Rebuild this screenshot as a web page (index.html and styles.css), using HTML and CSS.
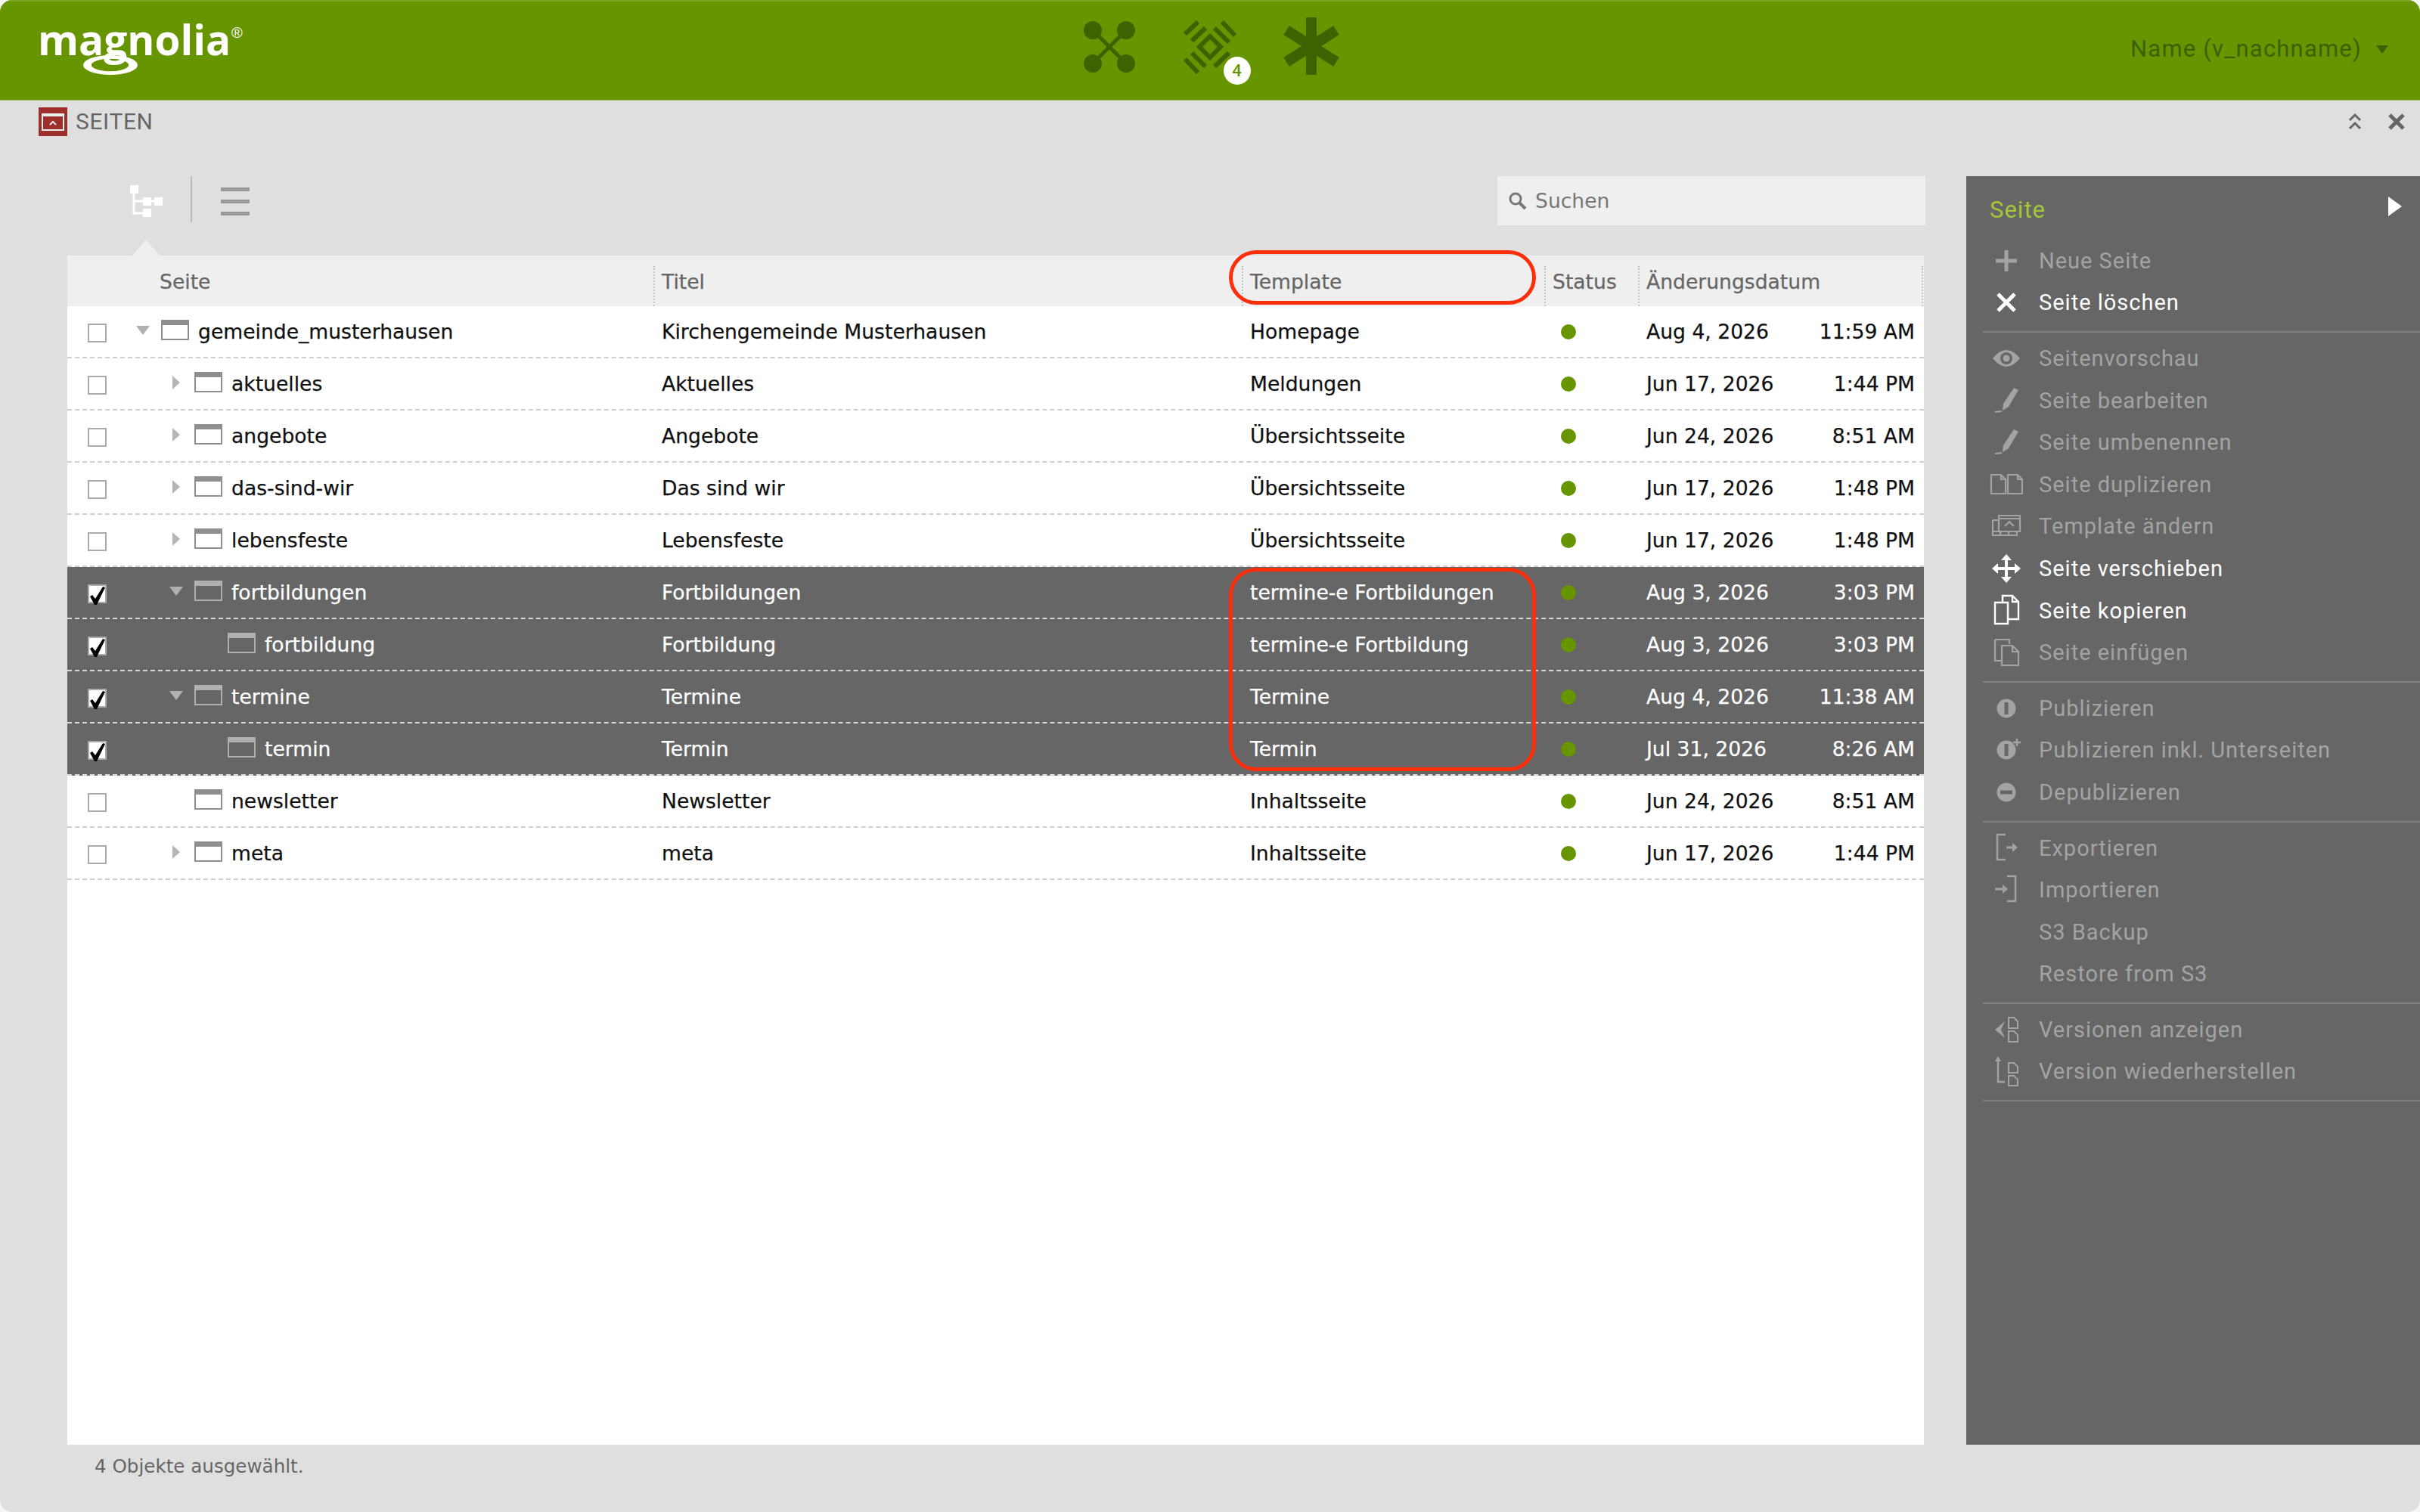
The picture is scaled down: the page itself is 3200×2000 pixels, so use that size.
FILE: index.html
```html
<!DOCTYPE html>
<html lang="de">
<head>
<meta charset="utf-8">
<title>Seiten</title>
<link rel="stylesheet" href="styles.css">
</head>
<body>
<svg class="defs" width="0" height="0">
  <symbol id="folder" viewBox="0 0 37 27"><rect x="1" y="1" width="35" height="25" fill="none" stroke="currentColor" stroke-width="2"/><rect x="1" y="1" width="35" height="6" fill="currentColor"/></symbol>
  <symbol id="pencil" viewBox="0 0 44 44"><path d="M32 5l6 3-13 22-8 5 1-9z" fill="currentColor"/><path d="M7 37l9-1" stroke="currentColor" stroke-width="2" fill="none"/></symbol>
  <symbol id="mark" viewBox="0 0 24 24"><path d="M2 13l3-2 4 5 10-16 3 1-11 23h-3z" fill="#000"/></symbol>
</svg>
<div class="app">
  <header class="topbar">
    <div class="logo">
      <svg width="290" height="110" viewBox="0 0 290 110">
        <text class="logo-text" x="0" y="73">magnolia</text>
        <path d="M60 86a36 13 0 1 0 72 0a36 13 0 1 0 -72 0zM71 87a24 8 0 1 1 49 -2a24 8 0 1 1 -49 2z" fill="#fff" fill-rule="evenodd"/>
        <text class="logo-reg" x="256" y="50">®</text>
      </svg>
    </div>
    <nav class="apps">
      <svg class="app-icon" width="68" height="68" viewBox="0 0 68 68"><path d="M12 12l44 44M56 12L12 56" stroke="#3d6300" stroke-width="5"/><circle cx="12" cy="12" r="12"/><circle cx="56" cy="12" r="12"/><circle cx="12" cy="56" r="12"/><circle cx="56" cy="56" r="12"/></svg>
      <div class="pulse">
        <svg width="70" height="72" viewBox="0 0 70 72"><g fill="none" stroke="#3d6300" stroke-width="6"><path d="M2 19L19 3M11 28L29 11M41 11L60 30M51 3L68 21M11 44L29 62M2 52L19 70M41 62L60 44"/><path d="M35 22L49 36 35 50 21 36z"/></g></svg>
        <span class="badge">4</span>
      </div>
      <svg class="app-icon" width="74" height="76" viewBox="0 0 74 76"><g stroke="#3d6300" stroke-width="14"><path d="M37 0v76"/><path d="M4 17l66 42"/><path d="M70 17L4 59"/></g></svg>
    </nav>
    <div class="user"><span>Name (v_nachname)</span><i class="caret"></i></div>
  </header>

  <div class="tabbar">
    <div class="tab">
      <svg width="38" height="38" viewBox="0 0 38 38"><rect width="38" height="38" fill="#9c2f2c"/><rect x="5" y="9" width="28" height="21" fill="none" stroke="#eee" stroke-width="2"/><rect x="5" y="8" width="28" height="4" fill="#eee"/><path d="M15 23l4-4 4 4" fill="none" stroke="#eee" stroke-width="2"/></svg>
      <span>SEITEN</span>
    </div>
    <div class="tab-tools">
      <svg width="18" height="23" viewBox="0 0 18 23"><path d="M2 10l7-7 7 7M2 21l7-7 7 7" fill="none" stroke="#666" stroke-width="3"/></svg>
      <svg width="22" height="22" viewBox="0 0 22 22"><path d="M2 2l18 18M20 2L2 20" stroke="#666" stroke-width="5"/></svg>
    </div>
  </div>

  <main class="content">
    <section class="workspace">
      <div class="toolbar">
        <div class="views">
          <svg class="tree-view" width="44" height="42" viewBox="0 0 44 42" fill="#fff"><rect x="0" y="0" width="11" height="11"/><rect x="17" y="16" width="11" height="11"/><rect x="32" y="16" width="11" height="11"/><rect x="17" y="31" width="11" height="11"/><path d="M5 8v29h14M5 21h30" fill="none" stroke="#fff" stroke-width="3"/></svg>
          <span class="view-sep"></span>
          <span class="list-view"><i></i><i></i><i></i></span>
        </div>
        <label class="search">
          <svg width="26" height="26" viewBox="0 0 26 26"><circle cx="10" cy="10" r="7" fill="none" stroke="#777" stroke-width="3"/><path d="M15 15l8 8" stroke="#777" stroke-width="4"/></svg>
          <span>Suchen</span>
        </label>
      </div>

      <div class="table">
        <span class="notch"></span>
        <div class="row head">
          <div class="c c1"><span class="head-seite">Seite</span></div>
          <div class="c c2">Titel</div>
          <div class="c c3">Template</div>
          <div class="c c4">Status</div>
          <div class="c c5">Änderungsdatum</div>
        </div>

        <div class="row">
          <div class="c c1"><span class="box"></span><span class="tree l0"><i class="arrow down"></i><svg class="folder"><use href="#folder"/></svg><b>gemeinde_musterhausen</b></span></div>
          <div class="c c2">Kirchengemeinde Musterhausen</div><div class="c c3">Homepage</div><div class="c c4"><i class="dot"></i></div><div class="c c5"><span>Aug 4, 2026</span><span>11:59 AM</span></div>
        </div>
        <div class="row">
          <div class="c c1"><span class="box"></span><span class="tree l1"><i class="arrow right"></i><svg class="folder"><use href="#folder"/></svg><b>aktuelles</b></span></div>
          <div class="c c2">Aktuelles</div><div class="c c3">Meldungen</div><div class="c c4"><i class="dot"></i></div><div class="c c5"><span>Jun 17, 2026</span><span>1:44 PM</span></div>
        </div>
        <div class="row">
          <div class="c c1"><span class="box"></span><span class="tree l1"><i class="arrow right"></i><svg class="folder"><use href="#folder"/></svg><b>angebote</b></span></div>
          <div class="c c2">Angebote</div><div class="c c3">Übersichtsseite</div><div class="c c4"><i class="dot"></i></div><div class="c c5"><span>Jun 24, 2026</span><span>8:51 AM</span></div>
        </div>
        <div class="row">
          <div class="c c1"><span class="box"></span><span class="tree l1"><i class="arrow right"></i><svg class="folder"><use href="#folder"/></svg><b>das-sind-wir</b></span></div>
          <div class="c c2">Das sind wir</div><div class="c c3">Übersichtsseite</div><div class="c c4"><i class="dot"></i></div><div class="c c5"><span>Jun 17, 2026</span><span>1:48 PM</span></div>
        </div>
        <div class="row">
          <div class="c c1"><span class="box"></span><span class="tree l1"><i class="arrow right"></i><svg class="folder"><use href="#folder"/></svg><b>lebensfeste</b></span></div>
          <div class="c c2">Lebensfeste</div><div class="c c3">Übersichtsseite</div><div class="c c4"><i class="dot"></i></div><div class="c c5"><span>Jun 17, 2026</span><span>1:48 PM</span></div>
        </div>
        <div class="row sel">
          <div class="c c1"><span class="box"><svg class="mark"><use href="#mark"/></svg></span><span class="tree l1"><i class="arrow down"></i><svg class="folder"><use href="#folder"/></svg><b>fortbildungen</b></span></div>
          <div class="c c2">Fortbildungen</div><div class="c c3">termine-e Fortbildungen</div><div class="c c4"><i class="dot"></i></div><div class="c c5"><span>Aug 3, 2026</span><span>3:03 PM</span></div>
        </div>
        <div class="row sel">
          <div class="c c1"><span class="box"><svg class="mark"><use href="#mark"/></svg></span><span class="tree l2"><i class="arrow none"></i><svg class="folder"><use href="#folder"/></svg><b>fortbildung</b></span></div>
          <div class="c c2">Fortbildung</div><div class="c c3">termine-e Fortbildung</div><div class="c c4"><i class="dot"></i></div><div class="c c5"><span>Aug 3, 2026</span><span>3:03 PM</span></div>
        </div>
        <div class="row sel">
          <div class="c c1"><span class="box"><svg class="mark"><use href="#mark"/></svg></span><span class="tree l1"><i class="arrow down"></i><svg class="folder"><use href="#folder"/></svg><b>termine</b></span></div>
          <div class="c c2">Termine</div><div class="c c3">Termine</div><div class="c c4"><i class="dot"></i></div><div class="c c5"><span>Aug 4, 2026</span><span>11:38 AM</span></div>
        </div>
        <div class="row sel">
          <div class="c c1"><span class="box"><svg class="mark"><use href="#mark"/></svg></span><span class="tree l2"><i class="arrow none"></i><svg class="folder"><use href="#folder"/></svg><b>termin</b></span></div>
          <div class="c c2">Termin</div><div class="c c3">Termin</div><div class="c c4"><i class="dot"></i></div><div class="c c5"><span>Jul 31, 2026</span><span>8:26 AM</span></div>
        </div>
        <div class="row">
          <div class="c c1"><span class="box"></span><span class="tree l1"><i class="arrow none"></i><svg class="folder"><use href="#folder"/></svg><b>newsletter</b></span></div>
          <div class="c c2">Newsletter</div><div class="c c3">Inhaltsseite</div><div class="c c4"><i class="dot"></i></div><div class="c c5"><span>Jun 24, 2026</span><span>8:51 AM</span></div>
        </div>
        <div class="row">
          <div class="c c1"><span class="box"></span><span class="tree l1"><i class="arrow right"></i><svg class="folder"><use href="#folder"/></svg><b>meta</b></span></div>
          <div class="c c2">meta</div><div class="c c3">Inhaltsseite</div><div class="c c4"><i class="dot"></i></div><div class="c c5"><span>Jun 17, 2026</span><span>1:44 PM</span></div>
        </div>

        <span class="mark-red mark-head"></span>
        <span class="mark-red mark-rows"></span>
      </div>
    </section>

    <aside class="actions">
      <div class="actions-head"><span>Seite</span><i class="play"></i></div>
      <div class="group">
        <div class="item"><svg viewBox="0 0 44 44"><path d="M22 8v28M8 22h28" stroke="currentColor" stroke-width="5"/></svg><span>Neue Seite</span></div>
        <div class="item on"><svg viewBox="0 0 44 44"><path d="M11 11l22 22M33 11L11 33" stroke="currentColor" stroke-width="5"/></svg><span>Seite löschen</span></div>
      </div>
      <div class="group">
        <div class="item"><svg viewBox="0 0 44 44"><path d="M4 22Q22 0 40 22 22 44 4 22z" fill="currentColor"/><circle cx="22" cy="22" r="8" fill="#666"/><circle cx="22" cy="22" r="4.500" fill="currentColor"/></svg><span>Seitenvorschau</span></div>
        <div class="item"><svg viewBox="0 0 44 44"><use href="#pencil"/></svg><span>Seite bearbeiten</span></div>
        <div class="item"><svg viewBox="0 0 44 44"><use href="#pencil"/></svg><span>Seite umbenennen</span></div>
        <div class="item"><svg viewBox="0 0 44 44"><path d="M2 9h13l6 6v19H2zM24 9h13l6 6v19H24zM15 9v6h6M37 9v6h6" fill="none" stroke="currentColor" stroke-width="2.200"/></svg><span>Seite duplizieren</span></div>
        <div class="item"><svg viewBox="0 0 44 44"><path d="M12 8h28v21H12zM12 12h28M4 14h8M4 14v20h32v-5M4 29h32M14 29v5M25 29v5M20 22l6-6 6 6" fill="none" stroke="currentColor" stroke-width="2.200"/></svg><span>Template ändern</span></div>
        <div class="item on"><svg viewBox="0 0 44 44"><path d="M22 3l7 8h-5v9h9v-5l8 7-8 7v-5h-9v9h5l-7 8-7-8h5v-9h-9v5l-8-7 8-7v5h9v-9h-5z" fill="currentColor"/></svg><span>Seite verschieben</span></div>
        <div class="item on"><svg viewBox="0 0 44 44"><path d="M17 10V2h13l8 8v23H24M30 2v8h8M7 11h17v28H7z" fill="none" stroke="currentColor" stroke-width="2.400"/></svg><span>Seite kopieren</span></div>
        <div class="item"><svg viewBox="0 0 44 44"><path d="M7 5h19v6M7 5v28h9M16 13h14l8 8v18H16zM30 13v8h8" fill="none" stroke="currentColor" stroke-width="2.200"/></svg><span>Seite einfügen</span></div>
      </div>
      <div class="group">
        <div class="item"><svg viewBox="0 0 44 44"><circle cx="22" cy="22" r="12.500" fill="currentColor"/><rect x="19.500" y="14" width="5" height="16" fill="#666"/></svg><span>Publizieren</span></div>
        <div class="item"><svg viewBox="0 0 44 44"><circle cx="22" cy="22" r="12.500" fill="currentColor"/><rect x="19.500" y="14" width="5" height="16" fill="#666"/><path d="M36 7v10M31 12h10" stroke="currentColor" stroke-width="2.500"/></svg><span>Publizieren inkl. Unterseiten</span></div>
        <div class="item"><svg viewBox="0 0 44 44"><circle cx="22" cy="22" r="12.500" fill="currentColor"/><rect x="14" y="19.500" width="16" height="5" fill="#666"/></svg><span>Depublizieren</span></div>
      </div>
      <div class="group">
        <div class="item"><svg viewBox="0 0 44 44"><path d="M21 4H10v33h11" fill="none" stroke="currentColor" stroke-width="2.400"/><path d="M22 21h10" stroke="currentColor" stroke-width="3"/><path d="M30 15l7 6-7 6z" fill="currentColor"/></svg><span>Exportieren</span></div>
        <div class="item"><svg viewBox="0 0 44 44"><path d="M23 4h11v33H23" fill="none" stroke="currentColor" stroke-width="2.400"/><path d="M7 21h12" stroke="currentColor" stroke-width="3"/><path d="M17 15l7 6-7 6z" fill="currentColor"/></svg><span>Importieren</span></div>
        <div class="item"><svg viewBox="0 0 44 44"></svg><span>S3 Backup</span></div>
        <div class="item"><svg viewBox="0 0 44 44"></svg><span>Restore from S3</span></div>
      </div>
      <div class="group">
        <div class="item"><svg viewBox="0 0 44 44"><path d="M25 6h7l5 5v9H25zM25 24h7l5 5v9H25z" fill="none" stroke="currentColor" stroke-width="2"/><path d="M20 11l-13 11 13 11-5-11z" fill="currentColor"/></svg><span>Versionen anzeigen</span></div>
        <div class="item"><svg viewBox="0 0 44 44"><path d="M25 11h7l5 5v8H25zM25 28h7l5 5v8H25z" fill="none" stroke="currentColor" stroke-width="2"/><path d="M11 6v30h9" fill="none" stroke="currentColor" stroke-width="2.400"/><path d="M11 2l4 7H7z" fill="currentColor"/></svg><span>Version wiederherstellen</span></div>
      </div>
    </aside>
  </main>

  <footer class="status">4 Objekte ausgewählt.</footer>
</div>
</body>
</html>
```
FILE: styles.css
```css
* { box-sizing: border-box; }
html, body { margin: 0; padding: 0; }
body { width: 3200px; height: 2000px; background: #f6f6f6; font-family: "DejaVu Sans", sans-serif; overflow: hidden; }
.defs { position: absolute; }
.app { width: 3200px; height: 2000px; display: flex; flex-direction: column; background: #dfdfdf; border-radius: 16px; overflow: hidden; }

.topbar { height: 133px; flex: none; background: #669500; border-top: 2px solid #7aa626; border-bottom: 1px solid #a2bf66; display: grid; grid-template-columns: 1fr auto 1fr; align-items: start; }
.logo { padding: 0 0 0 50px; height: 110px; }
.logo svg { display: block; margin-top: -2px; }
.logo-text { font-family: "Open Sans", sans-serif; font-weight: 700; font-size: 55px; fill: #fff; }
.logo-reg { font-family: "Liberation Sans", sans-serif; font-size: 20px; fill: #fff; }
.apps { display: flex; align-items: flex-start; margin-left: 3px; padding-top: 24px; }
.app-icon { fill: #3d6300; display: block; }
.apps > .app-icon:first-child { margin-top: 2px; margin-right: 64px; }
.pulse { position: relative; width: 70px; height: 72px; margin-right: 62px; }
.pulse svg { display: block; }
.apps > .app-icon:last-child { margin-top: -3px; }
.badge { position: absolute; left: 53px; top: 49px; width: 36px; height: 37px; border-radius: 50%; background: #fff; color: #669500; font: 500 22px/37px Roboto, sans-serif; text-align: center; }
.user { display: flex; justify-content: flex-end; align-items: center; gap: 19px; padding: 44px 42px 0 0; color: #3b6100; font: 400 31px/38px Roboto, sans-serif; letter-spacing: 1.200px; }
.caret { width: 0; height: 0; border-left: 8px solid transparent; border-right: 8px solid transparent; border-top: 11px solid #3b6100; }

.tabbar { height: 100px; flex: none; display: flex; justify-content: space-between; align-items: flex-start; padding: 9px 20px 0 51px; }
.tab { display: flex; align-items: center; gap: 11px; color: #666; font: 400 30px/38px Roboto, sans-serif; letter-spacing: .6px; }
.tab svg { display: block; }
.tab-tools { display: flex; align-items: center; gap: 35px; padding-top: 7px; }
.tab-tools svg { display: block; }

.content { flex: 1; min-height: 0; display: flex; padding-left: 89px; gap: 56px; }
.workspace { width: 2455px; display: flex; flex-direction: column; }
.toolbar { height: 105px; flex: none; display: flex; justify-content: space-between; align-items: flex-start; }
.views { display: flex; align-items: flex-start; padding-left: 83px; }
.tree-view { margin-top: 12px; display: block; }
.view-sep { width: 2px; height: 61px; background: #bbb; margin: 0 39px 0 36px; }
.list-view { display: flex; flex-direction: column; gap: 11px; padding-top: 15px; margin-left: -1px; }
.list-view i { display: block; width: 38px; height: 5px; background: #999; }
.search { width: 566px; height: 65px; margin-right: -2px; background: #efefef; display: flex; align-items: center; gap: 10px; padding-left: 14px; color: #777; font-size: 26.600px; }
.search svg { display: block; }

.table { position: relative; flex: 1; background: #fff; }
.notch { position: absolute; left: 86px; top: -21px; width: 0; height: 0; border-left: 18px solid transparent; border-right: 18px solid transparent; border-bottom: 21px solid #efefef; }
.row { display: grid; grid-template-columns: 774px 778px 400px 124px 379px; height: 69px; border-bottom: 2px dashed #cfcfcf; color: #111; font-size: 26.600px; -webkit-text-stroke: .25px currentColor; }
.c { display: flex; align-items: center; padding-left: 12px; white-space: nowrap; min-width: 0; }
.c1 { padding-left: 27px; }
.c5 { justify-content: space-between; padding-right: 12px; }
.c4 { padding-left: 23px; }
.head { height: 67px; background: #efefef; border-bottom: 0; color: #666; padding-top: 2px; }
.head .c { border-left: 2px dashed transparent; position: relative; padding-left: 10px; }
.head .c::before { content: ""; position: absolute; left: -1px; top: 12px; bottom: 0; border-left: 2px dotted #c4c4c4; }
.head .c1 { padding-left: 120px; }
.head .c1::before { display: none; }
.head .c5::after { content: ""; position: absolute; right: 1px; top: 12px; bottom: 0; border-left: 2px dotted #c4c4c4; }
.sel { background: #666; color: #fff; border-bottom-color: #d8d8d8; }
.box { width: 25px; height: 25px; flex: none; border: 2px solid #aaa; background: #fff; position: relative; top: 2px; }
.mark { position: absolute; left: -1px; top: 1px; width: 24px; height: 24px; }
.tree { display: flex; align-items: center; }
.tree b { font-weight: 400; }
.l0 { padding-left: 38px; }
.l1 { padding-left: 82px; }
.l2 { padding-left: 126px; }
.arrow { width: 19px; height: 12px; flex: none; margin-right: 15px; display: flex; justify-content: center; position: relative; top: -2px; }
.arrow.down::before { content: ""; width: 0; height: 0; border-left: 9px solid transparent; border-right: 9px solid transparent; border-top: 12px solid #b0b0b0; }
.arrow.right::before { content: ""; width: 0; height: 0; margin-top: -3px; border-top: 9px solid transparent; border-bottom: 9px solid transparent; border-left: 10px solid #b5b5b5; }
.folder { width: 37px; height: 27px; flex: none; color: #8f8f8f; margin-right: 12px; position: relative; top: -2px; }
.sel .folder { color: #b0b0b0; }
.dot { display: block; width: 20px; height: 20px; border-radius: 50%; background: #669500; position: relative; top: 0; }

.mark-red { position: absolute; left: 1536px; width: 406px; border: 5px solid #fb2f0c; border-radius: 36px; pointer-events: none; }
.mark-head { top: -7px; height: 72px; }
.mark-rows { top: 413px; height: 269px; }

.actions { width: 600px; height: 1678px; background: #666; flex: none; }
.actions-head { height: 84px; display: flex; justify-content: space-between; align-items: flex-start; padding: 24px 24px 0 31px; color: #a4c639; font: 400 31px/42px Roboto, sans-serif; letter-spacing: 1px; }
.play { width: 0; height: 0; border-top: 13px solid transparent; border-bottom: 13px solid transparent; border-left: 18px solid #fff; margin-top: 3px; }
.group { margin-left: 22px; padding: 6px 0 10px; border-bottom: 2px solid #808080; }
.group:nth-child(2) { padding-top: 0; }
.item { height: 55.600px; display: flex; align-items: center; gap: 21px; padding-left: 9px; color: #a3a3a3; font: 400 29px/40px Roboto, sans-serif; letter-spacing: 1px; }
.item svg { width: 44px; height: 44px; flex: none; display: block; }
.item.on { color: #fff; }

.status { flex: none; height: 89px; padding: 14px 0 0 125px; color: #666; font-size: 24.600px; line-height: 30px; }
```
